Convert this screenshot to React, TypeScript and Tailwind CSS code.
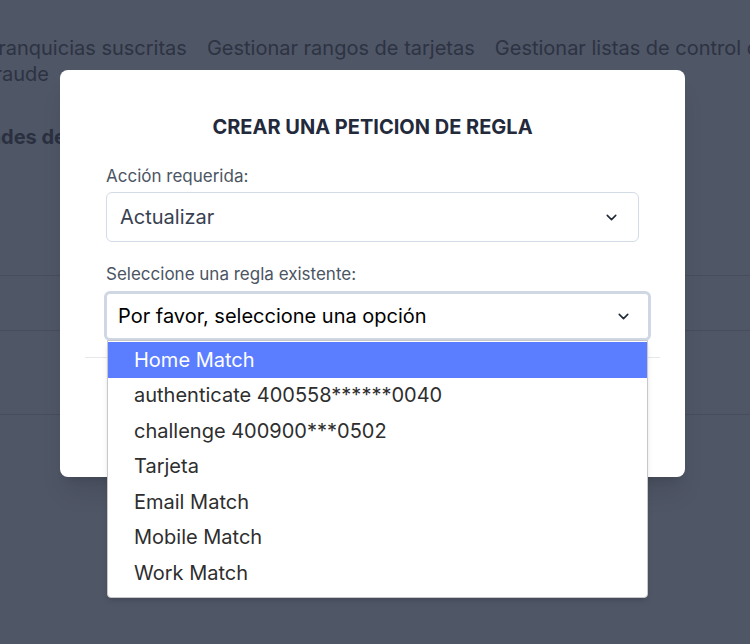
import React from 'react';
import { ChevronDown } from 'lucide-react';

const reglas = [
  'Home Match',
  'authenticate 400558******0040',
  'challenge 400900***0502',
  'Tarjeta',
  'Email Match',
  'Mobile Match',
  'Work Match',
];

const App: React.FC = () => {
  return (
    <div className="relative w-[750px] h-[644px] overflow-hidden bg-[#4f5666] font-['Inter',sans-serif]">
      {/* Page behind the overlay */}
      <div className="w-[800px] -ml-[13px] pt-[35px] text-[20px] leading-[26px] text-[#2d3342]">
        <span className="mr-5">Franquicias suscritas</span>
        <span className="mr-5">Gestionar rangos de tarjetas</span>
        <span>Gestionar listas de control de fraude</span>
      </div>
      <h2 className="mt-[36px] -ml-[86px] text-[20px] leading-[28px] font-bold text-[#2a3040]">Propiedades de regla</h2>
      <div className="mt-[124px] border-b border-[#474d5c]" />
      <div className="h-[55px] border-b border-[#474d5c]" />
      <div className="h-[84px] border-b border-[#474d5c]" />

      {/* Modal */}
      <div className="absolute left-[60px] top-[70px] w-[625px] h-[407px] bg-white rounded-lg shadow-xl">
        <h3 className="pt-[45px] text-center text-[20px] font-bold text-[#232a3b] leading-[24px]">
          CREAR UNA PETICION DE REGLA
        </h3>
        <div className="px-[46px] pt-[25px]">
          <label className="block text-[17px] leading-[24px] text-[#4b5563]">Acción requerida:</label>
          <div className="mt-[4px] h-[50px] flex items-center justify-between rounded-md border border-[#d3dbe6] pl-[13px] pr-[18px] text-[20px] text-[#374151]">
            <span>Actualizar</span>
            <ChevronDown size={17} strokeWidth={2.2} className="text-[#1f2937]" />
          </div>
          <label className="block mt-[20px] text-[17px] leading-[24px] text-[#4b5563]">Seleccione una regla existente:</label>
          <div className="relative -ml-[2px] -mr-[12px] mt-[5px]">
            <div className="h-[50px] flex items-center justify-between rounded-md border-[3px] border-[#cfd7e3] pl-[11px] pr-[16px] text-[20px] text-black">
              <span>Por favor, seleccione una opción</span>
              <ChevronDown size={17} strokeWidth={2.2} className="text-[#1f2937]" />
            </div>
            <div className="absolute z-10 left-[3px] right-[3px] top-[49px] bg-white border border-[#c8c8c8] rounded-b pt-px pb-[6px] shadow-md">
              {reglas.map((r, i) => (
                <div
                  key={r}
                  className={`h-[35.5px] flex items-center pl-[26px] text-[20px] ${i === 0 ? 'bg-[#5a7eff] text-white' : 'text-[#2e2e2e]'}`}
                >
                  {r}
                </div>
              ))}
            </div>
          </div>
        </div>
        <div className="mx-[25px] mt-[16px] border-t border-[#e5e7eb]" />
      </div>
    </div>
  );
};

export default App;
